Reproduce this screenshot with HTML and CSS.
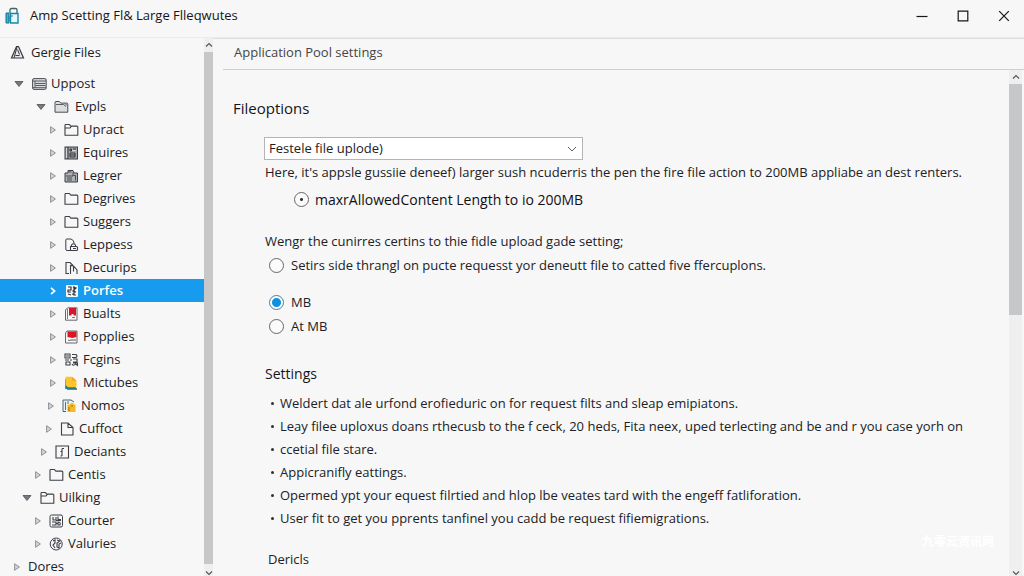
FILE: index.html
```html
<!DOCTYPE html>
<html lang="en">
<head>
<meta charset="utf-8">
<title>Amp Scetting</title>
<link rel="stylesheet" href="styles.css">
</head>
<body>
<svg class="defs" aria-hidden="true">
  <symbol id="open" viewBox="0 0 10 8"><path d="M1 1.500h8L5 6.500z" fill="#777a80" stroke="#4c4f55" stroke-width=".8"/></symbol>
  <symbol id="closed" viewBox="0 0 6 8"><path d="M.6.700v6.600L5.400 4z" fill="#d4d5d8" stroke="#85878c" stroke-width=".9"/></symbol>
  <symbol id="chevron" viewBox="0 0 6 8"><path d="M1 .8 4.600 4 1 7.200" fill="none" stroke="#fff" stroke-width="1.700"/></symbol>
  <symbol id="folder" viewBox="0 0 15 14"><path d="M1 12.200V2.300q0-.8.8-.8h3.600l1.400 1.600h6q1 0 1 1v8.100z" fill="none" stroke="#3c3f45" stroke-width="1.100"/></symbol>
  <symbol id="folder-tab" viewBox="0 0 15 14"><path d="M1 12.200V2.300q0-.8.8-.8h3.600l1.400 1.600h6q1 0 1 1v8.100zM1 5h5l1.500-1.900" fill="none" stroke="#3c3f45" stroke-width="1.100"/></symbol>
  <symbol id="folder-full" viewBox="0 0 15 14"><path d="M1 12.200V2.300q0-.8.8-.8h3.600l1.400 1.600h6q1 0 1 1v8.100z" fill="#dcdddf" stroke="#4b4e54"/><path d="M2 4.500h7.500l2.500 2M11 3.500l2 2" fill="none" stroke="#4b4e54" stroke-width=".9"/></symbol>
  <symbol id="drive" viewBox="0 0 15 14"><rect x=".6" y="1.600" width="13.600" height="10.800" rx="1.400" fill="#d9dadd" stroke="#4b4e54"/><path d="M1 4h13M3.500 6.500h10M3.500 8.500h10M1 10.700h13M3 4v6.700" stroke="#4b4e54" stroke-width=".9"/></symbol>
  <symbol id="cabinet" viewBox="0 0 15 14"><rect x="1" y="1" width="12.500" height="12" fill="#a5a7ab" stroke="#3c3f45"/><path d="M4 1v12M6 3h1.500v2H6zM9 3h3M6 7h5v4H6zM6 9h5" fill="none" stroke="#292b30" stroke-width=".9"/><path d="M2.500 2v10M8 4.500h4" stroke="#d5d6d8"/></symbol>
  <symbol id="case" viewBox="0 0 15 14"><path d="M1 4h3V1.500h5L10 4h3.500v9H1z" fill="#b0b2b6" stroke="#3c3f45"/><path d="M2 7h7V3.500M4.500 3h3M9.500 6.500h2v5M3 9h5M3 11h5" fill="none" stroke="#3c3f45" stroke-width=".9"/></symbol>
  <symbol id="page-lock" viewBox="0 0 15 14"><path d="M6 12.500H3Q1.800 12.500 1.800 11V2q0-1 1-1H7q3 1 3.200 4.500" fill="none" stroke="#3c3f45"/><path d="M7.500 8.500V7q2-2.500 4 0v1.500M6.500 8.500h6q1 0 1 1v2q0 1-1 1h-6zM9 10.500h3" fill="none" stroke="#3c3f45" stroke-width="1.100"/></symbol>
  <symbol id="page-fold" viewBox="0 0 15 14"><path d="M5 12.500H2V1.500h4l3 3M6.500 13V4.500l3 .5 3.500 4v4M9.500 5v5.500" fill="none" stroke="#3c3f45" stroke-width="1.100"/></symbol>
  <symbol id="code" viewBox="0 0 15 14"><rect x="2" y="1" width="12" height="12" rx="1" fill="#f7f7f7"/><path d="M4 3h3v3H4v2h3M9 3l3 1-3 3 3 1M4 10l3 1M8 10l4 1M10 2.500v9" fill="none" stroke="#30333a" stroke-width="1.200"/></symbol>
  <symbol id="book" viewBox="0 0 15 14"><path d="M3.500 .8H13v12.400H1.500V3z" fill="#f7f7f7" stroke="#66686d"/><path d="M5 1h7v7.500H9.500V7H7.500v1.500H5z" fill="#d8152b"/><path d="M3.500 2v10M8 10.500h3" stroke="#55586e" stroke-width=".8"/></symbol>
  <symbol id="book-flag" viewBox="0 0 15 14"><path d="M3 1h10v12H1.500V3z" fill="#f7f7f7" stroke="#66686d"/><path d="M3.500 1.500h9V7l-4 1-5-1z" fill="#dc1521"/><path d="M4 10q1.500 1 3 0h5" fill="none" stroke="#55586e"/></symbol>
  <symbol id="puzzle" viewBox="0 0 15 14"><path d="M1 1h5v4H1zM2 3h3M8 1.500h4q2 1.500 0 3H8M1 7h4M9 6h4v3H9M2 9v3h4V9zM8 11q1.500 2.500 3.500 0l2 1.500V10H9M6 7h2" fill="none" stroke="#3c3f45" stroke-width="1.100"/></symbol>
  <symbol id="note" viewBox="0 0 15 14"><path d="M1 3v10h11V8" fill="#1d9cc0"/><path d="M2 11h9M3 13h10" stroke="#2e6e68" stroke-width="1.500"/><path d="M1.500.8H8l4.500 4v6.400H4L1.500 9z" fill="#fcc52f"/><path d="M8 .8v4h4.500" fill="#f5a91b"/></symbol>
  <symbol id="stack" viewBox="0 0 15 14"><path d="M4 12.500H1V1h8l3 2" fill="#e9f1f5" stroke="#51636e"/><path d="M3.500 3v8M6 2v3" stroke="#327f9c"/><path d="M5.500 5.500H8l1-1.500h2.500v1.500h2V13h-8z" fill="#f8b91e"/><path d="M7 8v4M10 6v2" stroke="#8b6a2b"/></symbol>
  <symbol id="page" viewBox="0 0 15 14"><path d="M1.500 1H8l5 4.500V13H1.500zM8 1v4.500h5" fill="none" stroke="#3c3f45" stroke-width="1.100"/></symbol>
  <symbol id="info" viewBox="0 0 15 14"><path d="M1 1h12.500v12H1z" fill="none" stroke="#3c3f45" stroke-width="1.100"/><path d="M7 3.500v7.500M7 3.500h2M5.500 6.500H7M5.500 11H7" fill="none" stroke="#3c3f45" stroke-width="1.100"/></symbol>
  <symbol id="grid" viewBox="0 0 15 14"><rect x="1" y="1" width="12.500" height="12" rx="1.500" fill="none" stroke="#3c3f45"/><path d="M4 3v3h3V3M9 2.500v3h3M3 8h4v3H3M9 8q3 0 2 3H9zM7 6.500h5M7 9.500h2" fill="none" stroke="#3c3f45" stroke-width="1.100"/></symbol>
  <symbol id="globe" viewBox="0 0 15 14"><circle cx="7.200" cy="7" r="6" fill="none" stroke="#3c3f45"/><path d="M4 4l2-1v3L4 8l2 3M8 3l3 1-3 2v4l2 1V7l2-1" fill="none" stroke="#3c3f45" stroke-width="1.100"/></symbol>
  <symbol id="up" viewBox="0 0 10 8"><path d="M2 5.500 5 2.500l3 3" fill="none" stroke="#55575c" stroke-width="1.200"/></symbol>
  <symbol id="down" viewBox="0 0 10 8"><path d="M2 3.500 5 6.500l3-3" fill="none" stroke="#55575c" stroke-width="1.200"/></symbol>
</svg>

<div class="window">
  <header class="titlebar">
    <svg class="app-icon" viewBox="0 0 15 18" aria-hidden="true"><path d="M1 6h3v10H1z" fill="#3ab3c9" stroke="#14708c"/><path d="M5 6V3q0-1.500 1.500-1.500h4Q12 1.500 12 3v3" fill="none" stroke="#42616c" stroke-width="1.300"/><path d="M5.500 6.500H13V16H5.500z" fill="#e8f7fa" stroke="#1489ab" stroke-width="1.400"/><path d="M7 10V8M4 9v5" stroke="#1489ab"/></svg>
    <h1 class="title">Amp Scetting Fl&amp; Large Flleqwutes</h1>
    <div class="controls">
      <button class="control" aria-label="Minimize"><svg viewBox="0 0 12 12"><path d="M.5 6.500h11" stroke="#16161c" stroke-width="1.200"/></svg></button>
      <button class="control" aria-label="Maximize"><svg viewBox="0 0 12 12"><path d="M1.200 1.200h9.600v9.600H1.200z" fill="none" stroke="#16161c" stroke-width="1.200"/></svg></button>
      <button class="control" aria-label="Close"><svg viewBox="0 0 12 12"><path d="m1.200 1.200 9.600 9.600M10.800 1.200 1.200 10.800" stroke="#16161c" stroke-width="1.200"/></svg></button>
    </div>
  </header>

  <div class="workspace">
    <nav class="sidebar" aria-label="Files">
      <div class="root">
        <svg class="root-icon" viewBox="0 0 15 15" aria-hidden="true"><path d="M6.500 1.500h2L13.500 13h-12z" fill="#e9eaeb" stroke="#35383e" stroke-width="1.200"/><path d="M7 2 4 13M7.500 4.500l2 5M5.500 10.500h4" fill="none" stroke="#35383e"/></svg>
        <a href="#">Gergie Files</a>
      </div>
      <ul class="tree">
        <li class="node base"><button class="twisty open" aria-label="Collapse Uppost"><svg><use href="#open"/></svg></button><svg class="icon"><use href="#drive"/></svg><a href="#">Uppost</a></li>
        <li class="node group"><button class="twisty open" aria-label="Collapse Evpls"><svg><use href="#open"/></svg></button><svg class="icon"><use href="#folder-full"/></svg><a href="#">Evpls</a></li>
        <li class="node leaf"><button class="twisty" aria-label="Expand Upract"><svg><use href="#closed"/></svg></button><svg class="icon"><use href="#folder-tab"/></svg><a href="#">Upract</a></li>
        <li class="node leaf"><button class="twisty" aria-label="Expand Equires"><svg><use href="#closed"/></svg></button><svg class="icon"><use href="#cabinet"/></svg><a href="#">Equires</a></li>
        <li class="node leaf"><button class="twisty" aria-label="Expand Legrer"><svg><use href="#closed"/></svg></button><svg class="icon"><use href="#case"/></svg><a href="#">Legrer</a></li>
        <li class="node leaf"><button class="twisty" aria-label="Expand Degrives"><svg><use href="#closed"/></svg></button><svg class="icon"><use href="#folder"/></svg><a href="#">Degrives</a></li>
        <li class="node leaf"><button class="twisty" aria-label="Expand Suggers"><svg><use href="#closed"/></svg></button><svg class="icon"><use href="#folder"/></svg><a href="#">Suggers</a></li>
        <li class="node leaf"><button class="twisty" aria-label="Expand Leppess"><svg><use href="#closed"/></svg></button><svg class="icon"><use href="#page-lock"/></svg><a href="#">Leppess</a></li>
        <li class="node leaf"><button class="twisty" aria-label="Expand Decurips"><svg><use href="#closed"/></svg></button><svg class="icon"><use href="#page-fold"/></svg><a href="#">Decurips</a></li>
        <li class="node leaf selected"><button class="twisty" aria-label="Expand Porfes"><svg><use href="#chevron"/></svg></button><svg class="icon"><use href="#code"/></svg><a href="#" aria-current="page">Porfes</a></li>
        <li class="node leaf"><button class="twisty" aria-label="Expand Bualts"><svg><use href="#closed"/></svg></button><svg class="icon"><use href="#book"/></svg><a href="#">Bualts</a></li>
        <li class="node leaf"><button class="twisty" aria-label="Expand Popplies"><svg><use href="#closed"/></svg></button><svg class="icon"><use href="#book-flag"/></svg><a href="#">Popplies</a></li>
        <li class="node leaf"><button class="twisty" aria-label="Expand Fcgins"><svg><use href="#closed"/></svg></button><svg class="icon"><use href="#puzzle"/></svg><a href="#">Fcgins</a></li>
        <li class="node leaf"><button class="twisty" aria-label="Expand Mictubes"><svg><use href="#closed"/></svg></button><svg class="icon"><use href="#note"/></svg><a href="#">Mictubes</a></li>
        <li class="node leaf-b"><button class="twisty" aria-label="Expand Nomos"><svg><use href="#closed"/></svg></button><svg class="icon"><use href="#stack"/></svg><a href="#">Nomos</a></li>
        <li class="node leaf-c"><button class="twisty" aria-label="Expand Cuffoct"><svg><use href="#closed"/></svg></button><svg class="icon"><use href="#page"/></svg><a href="#">Cuffoct</a></li>
        <li class="node inner"><button class="twisty" aria-label="Expand Deciants"><svg><use href="#closed"/></svg></button><svg class="icon"><use href="#info"/></svg><a href="#">Deciants</a></li>
        <li class="node outer"><button class="twisty" aria-label="Expand Centis"><svg><use href="#closed"/></svg></button><svg class="icon"><use href="#folder"/></svg><a href="#">Centis</a></li>
        <li class="node branch"><button class="twisty open" aria-label="Collapse Uilking"><svg><use href="#open"/></svg></button><svg class="icon"><use href="#folder-tab"/></svg><a href="#">Uilking</a></li>
        <li class="node outer"><button class="twisty" aria-label="Expand Courter"><svg><use href="#closed"/></svg></button><svg class="icon"><use href="#grid"/></svg><a href="#">Courter</a></li>
        <li class="node outer"><button class="twisty" aria-label="Expand Valuries"><svg><use href="#closed"/></svg></button><svg class="icon"><use href="#globe"/></svg><a href="#">Valuries</a></li>
        <li class="node base"><button class="twisty" aria-label="Expand Dores"><svg><use href="#closed"/></svg></button><a href="#">Dores</a></li>
      </ul>
    </nav>
    <div class="scrollbar side-scroll">
      <button class="scroll-button" aria-label="Scroll files up"><svg><use href="#up"/></svg></button>
      <div class="thumb"></div>
      <button class="scroll-button" aria-label="Scroll files down"><svg><use href="#down"/></svg></button>
    </div>

    <main class="panel">
      <div class="crumb">Application Pool settings</div>
      <div class="view">
        <form class="content">
          <h2 class="heading">Fileoptions</h2>
          <div class="fields">
            <select class="picker" aria-label="File option"><option>Festele file uplode)</option></select>
            <p class="text">Here, it's appsle gussiie deneef) larger sush ncuderris the pen the fire file action to 200MB appliabe an dest renters.</p>
            <label class="choice limit"><input type="radio" name="limit" class="dot" checked>maxrAllowedContent Length to io 200MB</label>
            <p class="text intro">Wengr the cunirres certins to thie fidle upload gade setting;</p>
            <label class="choice"><input type="radio" name="scope">Setirs side thrangl on pucte requesst yor deneutt file to catted five ffercuplons.</label>
            <div class="units">
              <label class="choice"><input type="radio" name="unit" checked>MB</label>
              <label class="choice"><input type="radio" name="unit">At MB</label>
            </div>
            <h3 class="subheading">Settings</h3>
            <ul class="notes">
              <li>Weldert dat ale urfond erofieduric on for request filts and sleap emipiatons.</li>
              <li>Leay filee uploxus doans rthecusb to the f ceck, 20 heds, Fita neex, uped terlecting and be and r you case yorh on</li>
              <li>ccetial file stare.</li>
              <li>Appicranifly eattings.</li>
              <li>Opermed ypt your equest filrtied and hlop lbe veates tard with the engeff fatliforation.</li>
              <li>User fit to get you pprents tanfinel you cadd be request fifiemigrations.</li>
            </ul>
            <h3 class="more">Dericls</h3>
          </div>
        </form>
        <div class="scrollbar main-scroll">
          <button class="scroll-button" aria-label="Scroll up"><svg><use href="#up"/></svg></button>
          <div class="thumb"></div>
          <button class="scroll-button" aria-label="Scroll down"><svg><use href="#down"/></svg></button>
        </div>
        <div class="watermark" lang="zh">九零云资讯网</div>
      </div>
    </main>
  </div>
</div>
</body>
</html>
```
FILE: styles.css
```css
* { box-sizing: border-box; }
body { margin: 0; background: #f7f7f7; color: #202126; font: 13px/23px "Open Sans", "Noto Sans", sans-serif; }
h1, h2, h3, p, ul { margin: 0; padding: 0; font-weight: 400; }
ul { list-style: none; }
a { color: inherit; text-decoration: none; }
button { padding: 0; border: 0; background: none; font: inherit; }
svg { display: block; }
.defs { position: absolute; width: 0; height: 0; }

.window { height: 100vh; display: flex; flex-direction: column; overflow: hidden; }
.titlebar { flex: none; height: 37px; display: flex; align-items: center; padding: 0 8px 6px 5px; }
.app-icon { width: 15px; height: 18px; margin-right: 10px; }
.title { flex: 1; font-size: 13px; color: #15151a; }
.controls { display: flex; gap: 17px; }
.control { width: 24px; height: 24px; display: grid; place-items: center; }
.control svg { width: 12px; height: 12px; }

.workspace { flex: 1; min-height: 0; display: flex; border-top: 1px solid #ececee; }
.sidebar { flex: 0 0 204px; overflow: hidden; }
.root { display: flex; align-items: center; gap: 6px; height: 28px; padding-left: 10px; margin-bottom: 6px; }
.root-icon { width: 15px; height: 15px; }
.node { display: flex; align-items: center; height: 23px; }
.node a { flex: 1; }
.icon { flex: none; width: 15px; height: 14px; margin-right: 4px; }
.twisty { flex: none; width: 6px; height: 8px; margin-right: 8px; }
.twisty svg { width: 100%; height: 8px; }
.twisty.open { width: 10px; }
.base { padding-left: 14px; }
.branch { padding-left: 22px; }
.outer { padding-left: 35px; }
.group { padding-left: 36px; }
.group .icon { margin-right: 6px; }
.inner { padding-left: 41px; }
.leaf-c { padding-left: 46px; }
.leaf-b { padding-left: 48px; }
.leaf { padding-left: 50px; }
.selected { background: #169bee; color: #fff; font-weight: 600; }

.scrollbar { flex: none; display: flex; flex-direction: column; background: #efeff0; }
.scroll-button { flex: none; width: 100%; height: 14px; display: grid; place-items: center; }
.scroll-button svg { width: 10px; height: 8px; }
.scroll-button:last-child { height: 12px; place-items: end center; }
.thumb { background: #c6c7c8; }
.side-scroll { width: 9px; }
.side-scroll .thumb { flex: 1; }

.panel { flex: 1; min-width: 0; display: flex; flex-direction: column; border-top: 1px solid #dcdcdf; }
.crumb { flex: none; height: 31px; margin-left: 10px; padding: 2px 11px 0; border-bottom: 1px solid #cfcfd3; color: #44454a; }
.view { position: relative; flex: 1; min-height: 0; display: flex; }
.content { flex: 1; min-width: 0; overflow: hidden; padding: 26px 20px 0 20px; }
.heading { font-size: 15px; line-height: 24px; color: #15151a; }
.fields { padding: 17px 0 0 31px; }
.picker { appearance: none; display: block; width: 319px; height: 23px; padding: 0 4px; border: 1px solid #b4b5ba; border-radius: 0; color: inherit; font: inherit; line-height: 21px;
  background: #fff url("data:image/svg+xml,%3Csvg xmlns='http://www.w3.org/2000/svg' width='10' height='6'%3E%3Cpath d='M1 1l4 4 4-4' fill='none' stroke='%23606166'/%3E%3C/svg%3E") no-repeat right 5px center; }
.text { padding-left: 1px; line-height: 24px; }
.choice { display: flex; align-items: center; gap: 7px; height: 24px; padding-left: 5px; }
.limit { margin-top: 3px; padding-left: 30px; gap: 6px; color: #101015; font-size: 14px; }
.intro { margin-top: 18px; }
.units { margin-top: 13px; }
input[type="radio"] { appearance: none; flex: none; width: 15px; height: 15px; margin: 0; border: 1px solid #66676c; border-radius: 50%; background: #fbfbfb; }
input[type="radio"]:checked { border-color: #4a7f9c; background: radial-gradient(circle, #1090e0 0 4px, #fbfbfb 5px); }
input[type="radio"].dot:checked { border-color: #66676c; background: radial-gradient(circle, #303137 0 1px, #fbfbfb 2px); }
.subheading { margin-top: 24px; padding-left: 1px; font-size: 14px; line-height: 24px; color: #15151a; }
.notes { margin-top: 6px; padding-left: 7px; }
.notes li { display: flex; align-items: center; gap: 6px; white-space: nowrap; }
.notes li::before { content: ""; width: 3px; height: 3px; border-radius: 50%; background: #303137; }
.more { margin-top: 17px; padding-left: 4px; font-size: 13px; line-height: 24px; }
.main-scroll { width: 13px; margin-right: 2px; }
.main-scroll .thumb { height: 231px; }
.main-scroll .scroll-button:last-child { margin-top: auto; }
.watermark { position: absolute; right: 30px; bottom: 23px; color: #fff; font: 700 12px/24px "Noto Sans CJK SC", sans-serif; }
```
